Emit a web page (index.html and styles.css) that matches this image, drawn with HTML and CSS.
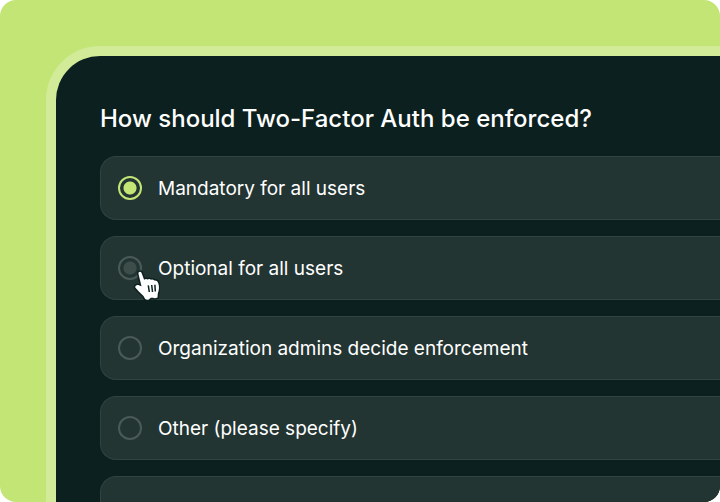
FILE: index.html
```html
<!DOCTYPE html>
<html lang="en">
<head>
<meta charset="utf-8">
<meta name="viewport" content="width=device-width, initial-scale=1">
<title>Two-Factor Auth</title>
<link rel="stylesheet" href="styles.css">
</head>
<body>
<main class="scene">
  <form class="panel">
    <fieldset class="question">
      <legend class="title">How should Two-Factor Auth be enforced?</legend>
      <div class="options">
        <label class="option"><input class="radio" type="radio" name="enforce" checked><span class="text">Mandatory for all users</span></label>
        <label class="option"><input class="radio hovered" type="radio" name="enforce"><span class="text">Optional for all users</span>
          <svg class="cursor" viewBox="0 0 28 36" width="28" height="36" aria-hidden="true">
            <path class="hand" d="M6.500 9C6 6.800 8.700 6 9.600 8L12.100 14.800Q13.800 13.300 15.600 14.500Q17.300 13.400 19 14.700Q20.800 14 22.300 15.600Q25.300 15.300 26.200 18C27.300 21 27.300 25 25.800 28.500L25.500 32.500Q23 33.600 21 32.800L18.800 32.800L16.800 34.500Q14.500 35.300 13 33.800L11.500 31L6.800 26.500L3.300 22.500C2.800 20.500 5.300 19.400 7.300 20.400L9.500 21.300Z"/>
            <path class="fingers" d="M16.300 20.300L17.300 27M19.700 20L20.500 27M22.900 19.700L23.300 26.500"/>
          </svg>
        </label>
        <label class="option"><input class="radio" type="radio" name="enforce"><span class="text">Organization admins decide enforcement</span></label>
        <label class="option"><input class="radio" type="radio" name="enforce"><span class="text">Other (please specify)</span></label>
        <div class="option"></div>
      </div>
    </fieldset>
  </form>
</main>
</body>
</html>
```
FILE: styles.css
```css
* { box-sizing: border-box; }
body { margin: 0; background: #fff; font-family: Inter, "Liberation Sans", sans-serif; color: #fff; }
.scene { height: 100vh; overflow: hidden; padding: 46px 0 0 46px; border-radius: 16px; background: #c2e576; }
.panel { min-height: 100%; padding: 44px 0 0 44px; border: solid #d1eb98; border-width: 10px 0 0 10px; border-radius: 54px 0 0 0; background: #0c211f; }
.question { margin: 0; padding: 0; border: 0; min-width: 0; }
.title { padding: 0; margin-bottom: 18px; font-size: 24px; font-weight: 500; line-height: 38px; }
.options { display: grid; gap: 16px; }
.option { position: relative; display: flex; align-items: center; gap: 16px; height: 64px; padding: 0 17px; border: solid #31423f; border-width: 1px 0 1px 1px; border-radius: 16px 0 0 16px; background: #233532; font-size: 19px; font-weight: 400; line-height: 28px; }
.text { padding-top: 2px; }
.radio { appearance: none; flex: none; width: 24px; height: 24px; margin: 0; border: 2px solid #4a5a57; border-radius: 50%; }
.radio:checked { border-color: #c2e576; background: radial-gradient(circle, #c2e576 6px, transparent 7px); }
.radio.hovered { background: radial-gradient(circle, #3d4d4a 6px, transparent 7px); }
.cursor { position: absolute; left: 31px; top: 28px; }
.hand { fill: #fff; stroke: #0c211f; stroke-width: 3; stroke-linejoin: round; paint-order: stroke; }
.fingers { fill: none; stroke: #0c211f; stroke-width: 1.5; }
```
